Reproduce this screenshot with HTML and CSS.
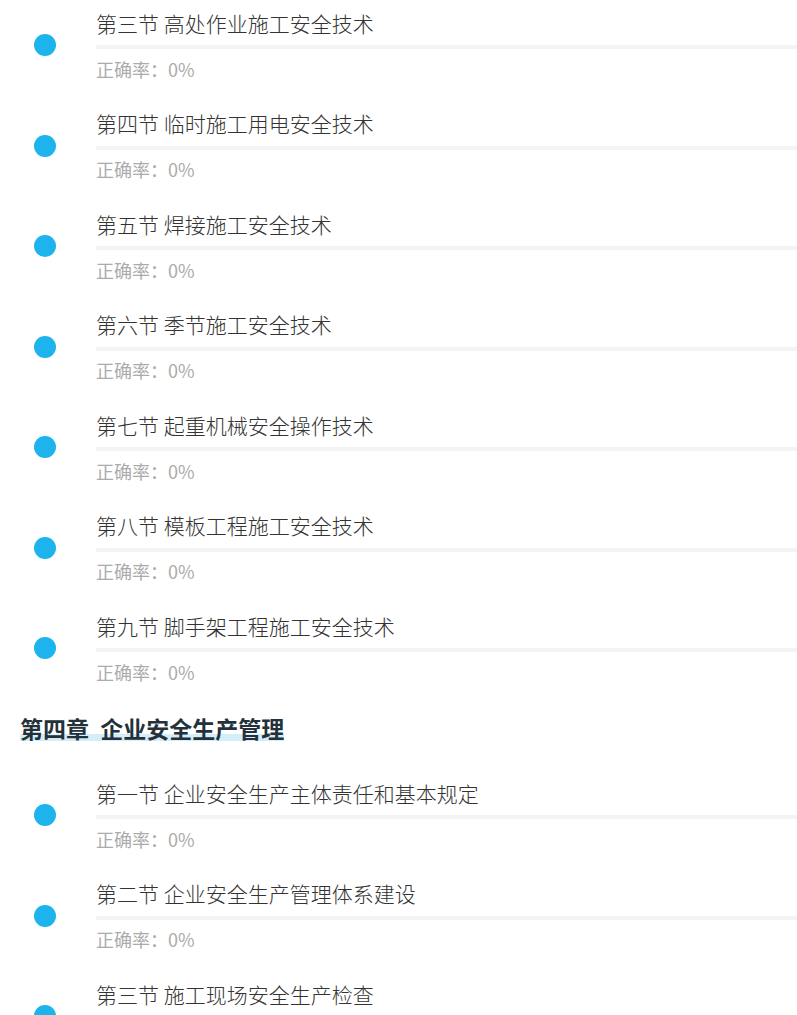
FILE: index.html
```html
<!DOCTYPE html>
<html lang="zh-CN">
<head>
<meta charset="utf-8">
<title>章节练习</title>
<link rel="stylesheet" href="styles.css">
</head>
<body>
<div class="list">
  <div class="item"><span class="dot"></span><div class="info"><div class="title">第三节 高处作业施工安全技术</div><div class="bar"></div><div class="rate">正确率：0%</div></div></div>
  <div class="item"><span class="dot"></span><div class="info"><div class="title">第四节 临时施工用电安全技术</div><div class="bar"></div><div class="rate">正确率：0%</div></div></div>
  <div class="item"><span class="dot"></span><div class="info"><div class="title">第五节 焊接施工安全技术</div><div class="bar"></div><div class="rate">正确率：0%</div></div></div>
  <div class="item"><span class="dot"></span><div class="info"><div class="title">第六节 季节施工安全技术</div><div class="bar"></div><div class="rate">正确率：0%</div></div></div>
  <div class="item"><span class="dot"></span><div class="info"><div class="title">第七节 起重机械安全操作技术</div><div class="bar"></div><div class="rate">正确率：0%</div></div></div>
  <div class="item"><span class="dot"></span><div class="info"><div class="title">第八节 模板工程施工安全技术</div><div class="bar"></div><div class="rate">正确率：0%</div></div></div>
  <div class="item"><span class="dot"></span><div class="info"><div class="title">第九节 脚手架工程施工安全技术</div><div class="bar"></div><div class="rate">正确率：0%</div></div></div>
  <div class="chapter"><span class="chapter-text">第四章 企业安全生产管理</span></div>
  <div class="item"><span class="dot"></span><div class="info"><div class="title">第一节 企业安全生产主体责任和基本规定</div><div class="bar"></div><div class="rate">正确率：0%</div></div></div>
  <div class="item"><span class="dot"></span><div class="info"><div class="title">第二节 企业安全生产管理体系建设</div><div class="bar"></div><div class="rate">正确率：0%</div></div></div>
  <div class="item"><span class="dot"></span><div class="info"><div class="title">第三节 施工现场安全生产检查</div><div class="bar"></div><div class="rate">正确率：0%</div></div></div>
</div>
</body>
</html>
```
FILE: styles.css
```css
html, body {
  margin: 0;
  padding: 0;
  background: #ffffff;
  font-family: "Noto Sans CJK SC", "Noto Sans", sans-serif;
}
.list {
  display: flex;
  flex-direction: column;
}
.item {
  display: flex;
  align-items: flex-start;
  height: 100.5px;
  box-sizing: border-box;
  padding-top: 8.5px;
}
.dot {
  flex: none;
  width: 22px;
  height: 22px;
  border-radius: 50%;
  background: #1db4ee;
  margin-left: 34px;
  margin-top: 25.5px;
  margin-right: 40px;
}
.info {
  flex: 1;
  min-width: 0;
}
.title {
  font-size: 21px;
  line-height: 28px;
  font-weight: 300;
  color: #333333;
  white-space: nowrap;
}
.bar {
  height: 4px;
  margin-top: 8.5px;
  background: #f4f4f4;
}
.rate {
  margin-top: 7.5px;
  font-size: 18px;
  line-height: 24px;
  color: #ababab;
}
.chapter {
  height: 66.5px;
  box-sizing: border-box;
  padding: 9.5px 0 0 20px;
}
.chapter-text {
  display: inline-block;
  font-size: 23px;
  line-height: 30px;
  font-weight: bold;
  word-spacing: 6px;
  color: #23323a;
  background: linear-gradient(to bottom, transparent 0, transparent 21px, #d3eef8 21px, #d3eef8 28px, transparent 28px);
}
```
